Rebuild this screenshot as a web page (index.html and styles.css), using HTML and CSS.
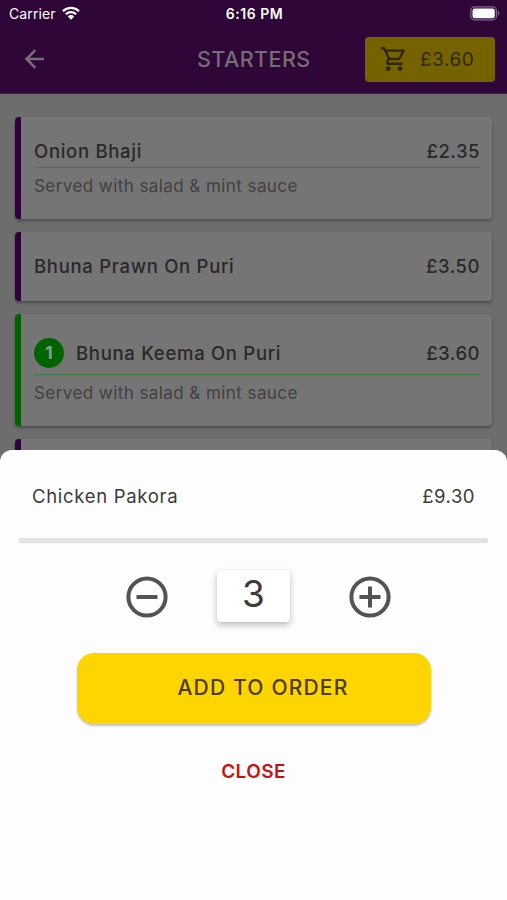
FILE: index.html
```html
<!DOCTYPE html>
<html lang="en">
<head>
<meta charset="utf-8">
<title>Starters</title>
<link rel="stylesheet" href="styles.css">
</head>
<body>
<div class="app">
  <header class="header">
    <div class="status">
      <div class="carrier"><span>Carrier</span>
        <svg class="wifi" viewBox="0 0 18 14"><path d="M1 5.2a11.4 11.4 0 0 1 16 0M3.9 8.2a7.3 7.3 0 0 1 10.2 0" fill="none" stroke="#fff" stroke-width="2.3"/><path d="M5.8 10.4a4.5 4.5 0 0 1 6.4 0L9 13.7z" fill="#fff"/></svg>
      </div>
      <span class="clock">6:16 PM</span>
      <svg class="battery" viewBox="0 0 30 15"><rect x=".8" y=".8" width="25.6" height="13" rx="3.8" fill="none" stroke="#84698a" stroke-width="1.2"/><rect x="2.5" y="2.4" width="22.3" height="9.8" rx="2.3" fill="#fff"/><path d="M27.8 5c2 .7 2 4 0 4.7z" fill="#84698a"/></svg>
    </div>
    <div class="nav">
      <svg class="back" viewBox="0 0 20 20"><path d="M19 10H2M10.3 1.2L1.6 10l8.7 8.8" fill="none" stroke="#746d74" stroke-width="2.5"/></svg>
      <h1 class="title">STARTERS</h1>
      <div class="basket">
        <svg class="cart" viewBox="1 2 21 20"><path fill="#30270b" d="M15.55 13c.75 0 1.41-.41 1.75-1.03l3.58-6.49A.996.996 0 0 0 20.01 4H5.21l-.94-2H1v2h2l3.6 7.59-1.35 2.44C4.52 15.37 5.48 17 7 17h12v-2H7l1.1-2h7.45zM6.16 6h12.15l-2.76 5H8.53L6.16 6zM7 18c-1.1 0-1.99.9-1.99 2S5.9 22 7 22s2-.9 2-2-.9-2-2-2zm10 0c-1.1 0-1.99.9-1.99 2s.89 2 1.99 2 2-.9 2-2-.9-2-2-2z"/></svg>
        <span class="total">£3.60</span>
      </div>
    </div>
  </header>
  <main class="list">
    <article class="card described">
      <div class="row"><span class="name">Onion Bhaji</span><span class="price">£2.35</span></div>
      <p class="note">Served with salad &amp; mint sauce</p>
    </article>
    <article class="card plain">
      <div class="row"><span class="name">Bhuna Prawn On Puri</span><span class="price">£3.50</span></div>
    </article>
    <article class="card described selected">
      <div class="row"><span class="count">1</span><span class="name">Bhuna Keema On Puri</span><span class="price">£3.60</span></div>
      <p class="note">Served with salad &amp; mint sauce</p>
    </article>
    <article class="card plain"></article>
  </main>
  <section class="sheet">
    <div class="item"><span class="name">Chicken Pakora</span><span class="price">£9.30</span></div>
    <div class="rule"></div>
    <div class="stepper">
      <svg class="step" viewBox="0 0 42 42"><circle cx="21" cy="21" r="18.6" fill="none" stroke="#535353" stroke-width="4"/><path d="M10.5 21h21" stroke="#535353" stroke-width="4"/></svg>
      <div class="quantity">3</div>
      <svg class="step" viewBox="0 0 42 42"><circle cx="21" cy="21" r="18.6" fill="none" stroke="#535353" stroke-width="4"/><path d="M10.5 21h21M21 10.5v21" stroke="#535353" stroke-width="4"/></svg>
    </div>
    <button class="add">ADD TO ORDER</button>
    <button class="close">CLOSE</button>
  </section>
</div>
</body>
</html>
```

FILE: styles.css
```css
* { box-sizing: border-box; }
body { margin: 0; font-family: Inter, "Open Sans", sans-serif; }
h1, p { margin: 0; }
button { border: 0; padding: 0; background: none; font-family: inherit; }
svg { display: block; flex: none; }

.app { position: relative; width: 507px; height: 900px; overflow: hidden; background: #6d6d6d; }

.header { height: 94px; background: #2f0638; border-bottom: 1px solid #421b48; }
.status { display: grid; grid-template-columns: 1fr auto 1fr; align-items: center; height: 27px; padding: 0 7px 0 9px; color: #fff; font-size: 14px; }
.carrier { display: flex; align-items: center; gap: 6px; letter-spacing: 0.1px; }
.wifi { width: 18px; height: 14px; margin-top: -1px; }
.clock { font-weight: 600; letter-spacing: 0.5px; }
.battery { justify-self: end; width: 30px; height: 15px; }
.nav { display: grid; grid-template-columns: 172px auto 1fr; align-items: center; height: 66px; padding: 0 12px 2px 25px; }
.back { width: 20px; height: 20px; }
.title { color: #746d74; font-size: 21.5px; font-weight: 500; line-height: 26px; margin-bottom: 1px; letter-spacing: 0.45px; }
.basket { justify-self: end; display: flex; align-items: center; gap: 14px; width: 130px; height: 45px; padding-left: 16px; border-radius: 4px; background: #756300; }
.cart { width: 25px; height: 24px; }
.total { padding-top: 1px; color: #30270b; font-size: 19px; line-height: 24px; letter-spacing: 0.5px; }

.list { display: flex; flex-direction: column; gap: 13px; padding: 23px 15px 0; }
.card { flex: none; padding: 0 12px 0 13px; border-left: 6px solid #32003f; border-radius: 4px; background: #757575; box-shadow: 0 2px 3px #4c4c4c; }
.described { height: 102px; padding-top: 19px; }
.plain { height: 69px; padding-top: 19px; }
.selected { height: 112px; padding-top: 24px; border-left-color: #006400; }
.row { display: flex; align-items: center; height: 30px; }
.described .row { height: 32px; padding-bottom: 2px; border-bottom: 1px solid #3f7a44; }
.selected .row { height: 37px; padding-bottom: 7px; }
.count { display: flex; align-items: center; justify-content: center; width: 30px; height: 30px; margin-right: 12px; border-radius: 50%; background: #006400; color: #8a988a; font-size: 18px; font-weight: 700; }
.name, .price { color: #292929; font-size: 18.5px; font-weight: 450; line-height: 28px; white-space: nowrap; letter-spacing: 0.7px; }
.price { margin-left: auto; letter-spacing: 0.5px; }
.note { margin-top: 5px; color: #414141; font-size: 17px; line-height: 26px; letter-spacing: 0.43px; white-space: nowrap; }

.sheet { position: absolute; inset: 450px 0 0; display: flex; flex-direction: column; align-items: center; border-radius: 12px 12px 0 0; background: #fdfdfd; }
.item { display: flex; align-items: center; width: 100%; height: 88px; padding: 4px 32px 0; }
.item .name, .item .price { color: #3a3a3a; font-weight: 400; }
.rule { width: 469px; height: 5px; border-radius: 1px; background: #e3e3e3; }
.stepper { display: grid; grid-template-columns: 91px 132px 42px; width: 265px; margin: 27px 0 0 10px; height: 83px; }
.step { width: 42px; height: 42px; margin-top: 6px; }
.quantity { width: 73px; height: 52px; border-radius: 4px; background: #fff; box-shadow: 0 3px 6px #bbb; color: #3b3b3b; font-size: 37px; line-height: 48px; text-align: center; }
.add { width: 354px; height: 71px; padding: 0 0 3px 19px; border-radius: 17px; background: #fed500; box-shadow: 0 2px 2px #c5c5c0; color: #4b3c19; font-size: 21px; font-weight: 500; letter-spacing: 1.2px; }
.close { height: 28px; margin-top: 34px; color: #cb1012; font-size: 19px; font-weight: 600; line-height: 28px; letter-spacing: 0.4px; }
```
